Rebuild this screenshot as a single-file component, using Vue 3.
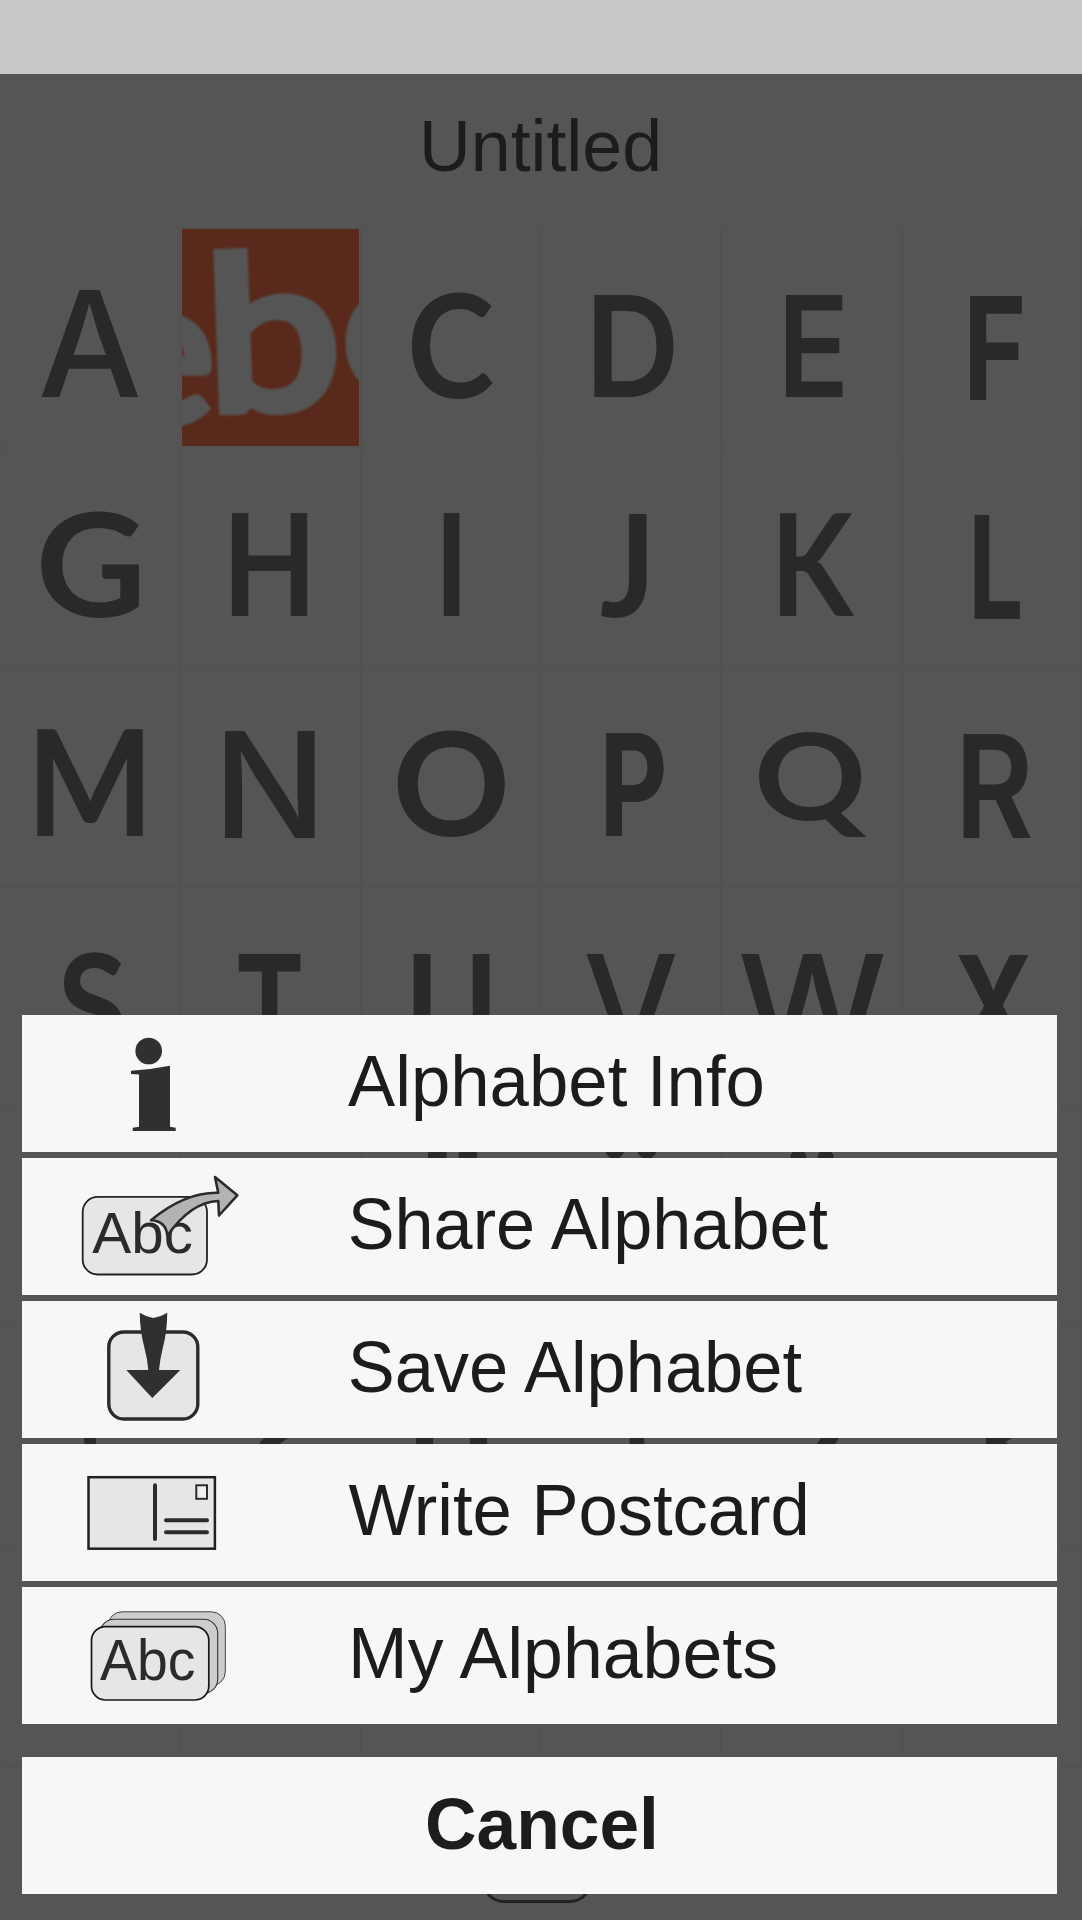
<script setup>
const ctx = document.createElement('canvas').getContext('2d')

// Scales a piece of text so that its ink fills the given box.
function fit(text, font, x0, x1, y0, y1) {
  ctx.font = font
  const m = ctx.measureText(text)
  const sx = (x1 - x0) / (m.actualBoundingBoxLeft + m.actualBoundingBoxRight)
  const tx = x0 + m.actualBoundingBoxLeft * sx
  if (y1 === undefined) return `translate(${tx} ${y0}) scale(${sx} 1)`
  const sy = (y1 - y0) / (m.actualBoundingBoxAscent + m.actualBoundingBoxDescent)
  const ty = y0 + m.actualBoundingBoxAscent * sy
  return `translate(${tx} ${ty}) scale(${sx} ${sy})`
}

const FONTS = {
  round: '700 142px Lato',
  light: '500 142px Inter',
  sharp: '600 142px Inter',
  heavy: '700 142px Inter',
}
const LABEL = '400 72px "Liberation Sans"'
const BOLD = '700 72px "Liberation Sans"'
const SMALL = '400 57px "Liberation Sans"'
const PHOTO = '700 200px Lato'
const PHOTO_THIN = '400 200px Lato'

const COLUMN = 180.33

function cutOf(ch) {
  if (ch === '') return 'round'
  if ('ANVW'.includes(ch)) return 'light'
  if ('FLPTX'.includes(ch)) return 'heavy'
  if ('DEHIRUYZ'.includes(ch)) return 'sharp'
  return 'round'
}

// [glyph, left, right, top, bottom] of the ink, inside a row
const rows = [
  [['A', 41, 139, 61, 168], ['photo', 0, 0, 0, 0], ['C', 411, 493, 64, 170], ['D', 594, 674, 66, 168], ['E', 786, 843, 66, 168], ['F', 969.5, 1022, 67, 171]],
  [['G', 41, 140, 63, 169], ['H', 232, 308, 64.5, 167], ['I', 443, 459, 64.5, 167], ['J', 601, 647, 64.5, 169], ['K', 780, 855, 64.5, 167], ['L', 974, 1020, 66, 170]],
  [['M', 37, 143, 60, 167.5], ['N', 225, 315, 63, 169.5], ['O', 397, 505, 63, 169], ['P', 606, 664, 65, 167.5], ['Q', 759, 867, 63, 169], ['R', 963, 1031, 66, 170]],
  [['S', 60, 123, 64, 171], ['T', 239, 301, 66, 168], ['U', 413, 490, 66, 169], ['V', 586, 676, 66, 168], ['W', 741, 884, 66, 168], ['X', 955, 1031, 67, 171]],
  [['Y', 50, 130, 67, 169], ['Z', 236, 306, 67, 169], ['Ä', 403, 502, 38, 169], ['Ö', 577, 685, 32, 171], ['Ü', 775, 850, 42, 171], ['', 0, 0, 0, 0]],
  [['!', 82, 98, 67, 171], ['?', 240, 300, 67, 169], ['0', 415, 487, 67, 169], ['1', 606, 660, 67, 169], ['2', 776, 845, 67, 169], ['3', 960, 1020, 67, 169]],
  [['', 0, 0, 0, 0], ['', 0, 0, 0, 0], ['', 0, 0, 0, 0], ['', 0, 0, 0, 0], ['', 0, 0, 0, 0], ['', 0, 0, 0, 0]],
].map((row) =>
  row.map(([ch, x0, x1, y0, y1], i) => {
    const photo = ch === 'photo'
    const cut = photo ? 'round' : cutOf(ch)
    const left = i * COLUMN
    const transform = ch && !photo
      ? fit(ch, FONTS[cut], x0 - left, x1 - left, y0 + 1.2, y1 + 1.2)
      : ''
    return { ch, photo, cut, transform }
  }),
)

const items = [
  { icon: 'info', label: 'Alphabet Info', x0: 326, x1: 741 },
  { icon: 'share', label: 'Share Alphabet', x0: 328.6, x1: 810 },
  { icon: 'save', label: 'Save Alphabet', x0: 328.6, x1: 784 },
  { icon: 'postcard', label: 'Write Postcard', x0: 326.5, x1: 784 },
  { icon: 'stack', label: 'My Alphabets', x0: 331, x1: 758 },
]
</script>

<template>
  <div class="screen">
    <div class="status"></div>
    <header class="title">
      <svg width="1082" height="154">
        <text class="label" :transform="fit('Untitled', LABEL, 424, 658, 97)">Untitled</text>
      </svg>
    </header>

    <main class="board">
      <div v-for="(row, r) in rows" :key="r" class="row">
        <div v-for="(cell, c) in row" :key="c" class="cell">
          <svg v-if="cell.photo" class="photo" width="177" height="217" viewBox="0 0 177 217">
            <rect width="177" height="217" fill="#59291b" />
            <g class="photo-text">
              <text :transform="fit('e', PHOTO, -72, 28, 84, 196)">e</text>
              <g transform="rotate(-2 95 110)">
                <text class="thin" :transform="fit('b', PHOTO_THIN, 41, 148, 23, 180)">b</text>
              </g>
              <text :transform="fit('o', PHOTO, 165, 275, 58, 166)">o</text>
            </g>
          </svg>
          <svg v-else-if="cell.ch" width="180" height="219">
            <text class="letter" :class="cell.cut" :transform="cell.transform">{{ cell.ch }}</text>
          </svg>
        </div>
      </div>
    </main>

    <div class="home"></div>

    <section class="sheet">
      <div v-for="item in items" :key="item.icon" class="item">
        <svg width="1034" height="137" viewBox="0 0 1034 137">
          <g v-if="item.icon === 'info'" fill="#303030">
            <circle cx="126.7" cy="36" r="13.3" />
            <path d="M109 55.7 Q129 54.5 148 50.7 V111.7 L153.7 112.7 V116 H110.7 V112.7 L117 111.7 V59.5 L109 58.9 Z" />
          </g>
          <g v-else-if="item.icon === 'share'">
            <rect x="60.7" y="38.9" width="124.3" height="77.6" rx="15" fill="#e6e6e6" stroke="#222" stroke-width="1.8" />
            <text class="abc" :transform="fit('Abc', SMALL, 70.3, 169.3, 94.5)">Abc</text>
            <path
              d="M129 62.3 Q163 34 196.3 34.8 L193 19 L215.3 37.3 L197 57.5 L196.3 43 Q169 44 145.3 77.7 Q144 63 129 62.3 Z"
              fill="#b3b3b3" stroke="#2b2b2b" stroke-width="2.6" stroke-linejoin="round" />
          </g>
          <g v-else-if="item.icon === 'save'">
            <rect x="86.8" y="31" width="89" height="87" rx="15" fill="#e6e6e6" stroke="#2b2b2b" stroke-width="3.4" />
            <path
              d="M117.7 11.7 Q124 15.8 131.3 17 Q139 15.8 145.3 11.7 Q145 31 141 46 Q138 58 137 69 H158.3 L130.3 97 L104.3 69 H126.3 Q125.5 58 122 45 Q118 30 117.7 11.7 Z"
              fill="#303030" />
          </g>
          <g v-else-if="item.icon === 'postcard'" stroke="#2b2b2b" stroke-linecap="round">
            <rect x="66.5" y="33.2" width="126.4" height="71.5" fill="#e6e6e6" stroke="#222" stroke-width="2.5" />
            <path d="M133 41.2 V95" stroke-width="4" />
            <path d="M144 76.2 H185 M144 88.3 H185" stroke-width="4" />
            <rect x="174.3" y="41.3" width="10.7" height="13.5" fill="#f0f0f0" stroke-width="2" />
          </g>
          <g v-else>
            <rect x="86" y="24.8" width="117.3" height="74" rx="14" fill="#cdcdcd" stroke="#444" stroke-width="1" />
            <rect x="78" y="32.3" width="117.7" height="74" rx="14" fill="#cdcdcd" stroke="#333" stroke-width="1.1" />
            <rect x="69.5" y="39.6" width="117.3" height="73.4" rx="14" fill="#e6e6e6" stroke="#181818" stroke-width="1.7" />
            <text class="abc" :transform="fit('Abc', SMALL, 78, 172, 92.5)">Abc</text>
          </g>
          <text class="label" :transform="fit(item.label, LABEL, item.x0, item.x1, 91)">{{ item.label }}</text>
        </svg>
      </div>
      <div class="item cancel">
        <svg width="1034" height="137">
          <text class="label bold" :transform="fit('Cancel', BOLD, 405, 632, 92)">Cancel</text>
        </svg>
      </div>
    </section>
  </div>
</template>

<style>
body {
  margin: 0;
  background: #555;
}
</style>

<style scoped>
.screen {
  position: relative;
  width: 1082px;
  height: 1920px;
  overflow: hidden;
  background: #555;
}
svg {
  display: block;
  overflow: visible;
}
.status {
  height: 74px;
  background: #c9c9c9;
}
.title {
  height: 154px;
}
.board {
  display: flex;
  flex-direction: column;
  border-bottom: 2px solid #525252;
}
.row {
  display: flex;
  height: 219.6px;
}
.cell {
  box-sizing: border-box;
  width: 180.33px;
  height: 219.6px;
  box-shadow: inset 1px 1px 0 #525252, inset -1px -1px 0 #525252;
}
.letter {
  font: 700 142px Lato, sans-serif;
  fill: #292929;
}
.letter.light {
  font: 500 142px Inter, sans-serif;
}
.letter.sharp {
  font: 600 142px Inter, sans-serif;
}
.letter.heavy {
  font: 700 142px Inter, sans-serif;
}
.photo {
  margin: 1.4px 0 0 1.67px;
  overflow: hidden;
}
.photo-text {
  font: 700 200px Lato, sans-serif;
  fill: #555;
  stroke: #555;
  stroke-width: 4px;
  filter: blur(1px);
}
.thin {
  font-weight: 400;
  stroke-width: 11px;
  stroke-linejoin: miter;
}
.label {
  font: 400 72px 'Liberation Sans', sans-serif;
  fill: #1c1c1c;
}
.bold {
  font-weight: 700;
}
.abc {
  font: 400 57px 'Liberation Sans', sans-serif;
  fill: #2b2b2b;
}
.home {
  position: absolute;
  left: 482px;
  top: 1797px;
  width: 104px;
  height: 100px;
  border: 3px solid #222;
  border-radius: 22px;
}
.sheet {
  position: absolute;
  left: 22px;
  top: 1015px;
  display: flex;
  flex-direction: column;
  gap: 6px;
  width: 1034.5px;
}
.item {
  height: 137px;
  background: #f7f7f7;
}
.cancel {
  margin-top: 26.5px;
}
</style>
